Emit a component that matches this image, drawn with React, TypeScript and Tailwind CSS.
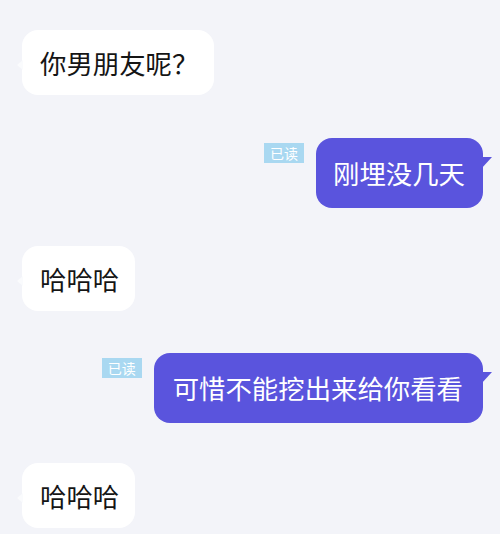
import React from "react";

const font = { fontFamily: '"Noto Sans CJK SC", "Noto Sans", sans-serif' };

function LeftBubble({ text, className = "" }: { text: string; className?: string }) {
  return (
    <div className={`relative self-start ${className}`}>
      <div className="absolute left-[-5px] top-[30px] w-0 h-0 border-y-[5px] border-y-transparent border-r-[6px] border-r-[#fafbfd]" />
      <div className="h-[65px] flex items-center bg-white rounded-[16px] pl-[18px] pr-[16px] text-[26.4px] leading-[34px] text-[#151515]">
        {text}
      </div>
    </div>
  );
}

function RightBubble({ text, className = "", pl, pr }: { text: string; className?: string; pl: string; pr: string }) {
  return (
    <div className={`flex items-start self-end ${className}`}>
      <div className="mt-[5px] mr-[12px] w-[40px] h-[20px] bg-[#a9d8f1] flex items-center justify-center text-[14px] leading-none text-white">
        已读
      </div>
      <div className="relative">
        <div className={`h-[70px] flex items-center bg-[#5a54dd] rounded-[16px] ${pl} ${pr} text-[26.4px] leading-[34px] text-white`}>
          {text}
        </div>
        <div className="absolute right-[-9px] top-[19px] w-0 h-0 border-b-[12px] border-b-transparent border-l-[11px] border-l-[#5a54dd]" />
      </div>
    </div>
  );
}

export default function App() {
  return (
    <div className="w-[500px] h-[534px] overflow-hidden bg-[#f3f4f9]" style={font}>
      <div className="flex flex-col pt-[30px] pl-[22px] pr-[17px]">
        <LeftBubble text="你男朋友呢？" />
        <RightBubble text="刚埋没几天" className="mt-[43px]" pl="pl-[17px]" pr="pr-[18px]" />
        <LeftBubble text="哈哈哈" className="mt-[38px]" />
        <RightBubble text="可惜不能挖出来给你看看" className="mt-[42px]" pl="pl-[19px]" pr="pr-[20px]" />
        <LeftBubble text="哈哈哈" className="mt-[40px]" />
      </div>
    </div>
  );
}
